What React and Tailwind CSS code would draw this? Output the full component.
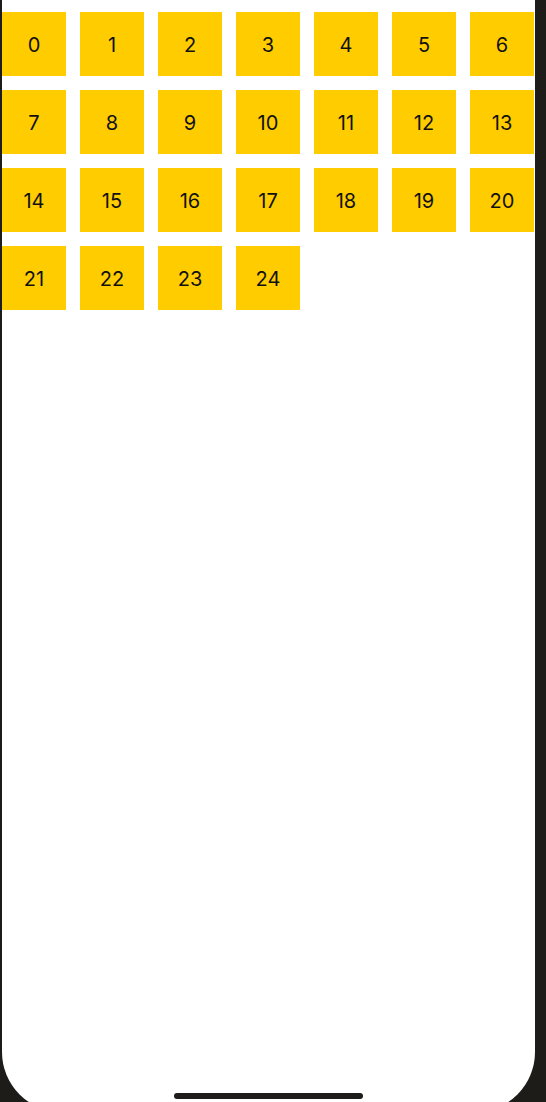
export default function App() {
  const items = Array.from({ length: 25 }, (_, i) => i);
  return (
    <div className="relative h-[1102px] w-[546px] overflow-hidden bg-[#1d1c18]">
      <div className="ml-[2px] h-[1112px] w-[533px] rounded-b-[60px] bg-white pt-[12px]">
        <div className="grid grid-cols-[repeat(7,64px)] gap-[14px]">
          {items.map((n) => (
            <div
              key={n}
              className="flex h-[64px] w-[64px] items-center justify-center bg-[#ffcc00] pt-px text-[20px] text-[#111111]"
              style={{ fontFamily: "Inter, 'Noto Sans', sans-serif" }}
            >
              {n}
            </div>
          ))}
        </div>
      </div>
      <div className="absolute left-[174px] top-[1093px] h-[6px] w-[189px] rounded-full bg-[#1d1c18]" />
    </div>
  );
}
